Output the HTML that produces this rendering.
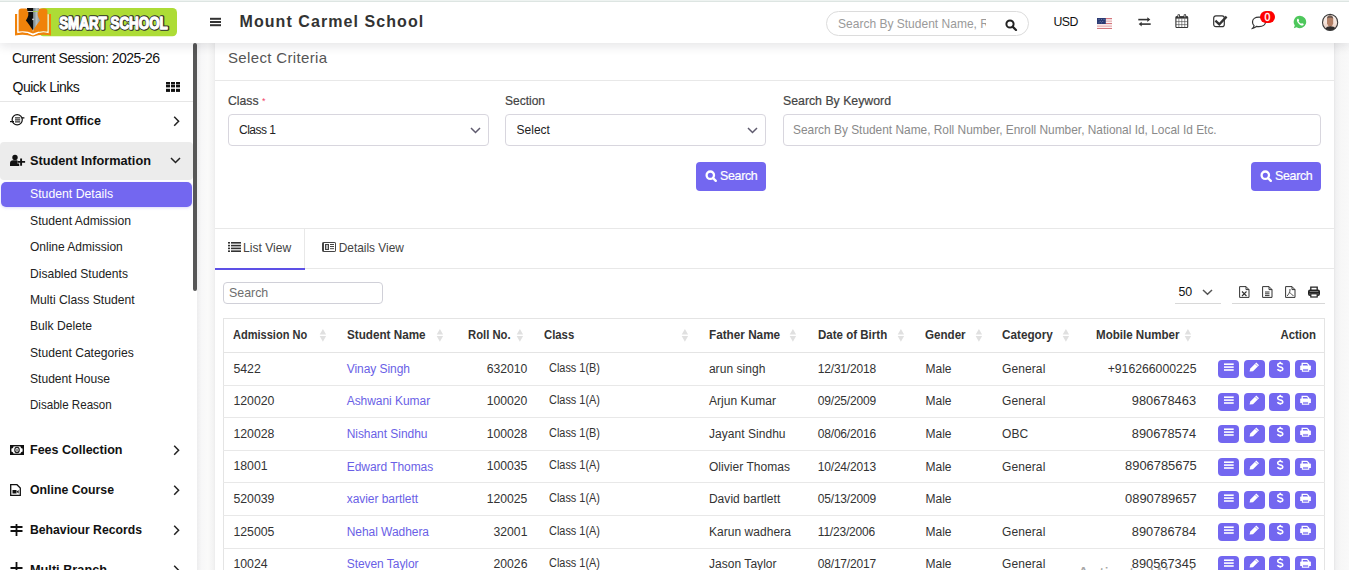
<!DOCTYPE html>
<html><head><meta charset="utf-8"><title>Student Details</title>
<style>
html,body{margin:0;padding:0;width:1349px;height:570px;overflow:hidden;background:#f8f8f8}
body{position:relative;font-family:"Liberation Sans",sans-serif}
.t{position:absolute;line-height:1;white-space:nowrap}
svg{display:block}
</style></head><body>
<div style="position:absolute;left:0px;top:0px;width:1349px;height:570px;background:#f8f8f8"></div><div style="position:absolute;left:215px;top:43px;width:1119px;height:527px;background:#fff"></div><div style="position:absolute;left:0px;top:43px;width:197px;height:527px;background:#fff"></div><div style="position:absolute;left:197px;top:43px;width:18px;height:527px;background:linear-gradient(90deg,#ededee,#f7f7f8 25%,#fafafa 60%,#f3f3f3 90%,#ececed)"></div><div style="position:absolute;left:193px;top:43px;width:4px;height:248px;background:#575757;border-radius:2px"></div><div style="position:absolute;left:1334px;top:43px;width:15px;height:527px;background:linear-gradient(90deg,#e6e6e7,#f1f1f2 12%,#f7f7f7 45%,#f9f9f9)"></div><div style="position:absolute;left:0px;top:0px;width:1349px;height:43px;background:#fff;box-shadow:0 3px 10px rgba(20,20,40,.11);z-index:2"></div><div style="position:absolute;left:0px;top:0px;width:1349px;height:1px;background:#eef3f1;z-index:3"></div><div style="position:absolute;left:0px;top:1px;width:1349px;height:1px;background:#dde5e2;z-index:3"></div><div style="position:absolute;left:0;top:0;width:1349px;height:43px;z-index:4"><svg style="position:absolute;left:15px;top:8px;" width="163" height="29" viewBox="0 0 163 29">
<defs><linearGradient id="nibg" x1="0" x2="1"><stop offset="0" stop-color="#6f7a7d"/><stop offset=".5" stop-color="#b5bfc2"/><stop offset="1" stop-color="#8d9799"/></linearGradient></defs>
<rect x="24" y="0" width="138" height="28.3" rx="4.5" fill="#addc36"/>
<path d="M0 6 H2.4 V24.6 Q10 22.6 18 27.2 Q26 22.6 33.6 24.6 V6 H36 V27.6 Q27 25.6 18 28.4 Q9 25.6 0 27.6Z" fill="#f0820a"/>
<path d="M3 6.2 V24.3 Q10.5 22.3 18 26.7 Q25.5 22.3 33 24.3 V6.2" fill="none" stroke="#fff" stroke-width="1.3"/>
<path d="M3.6 3 Q3.6 0.5 6.5 0.5 H11 Q13 0.8 13.6 3 L18 24 L18 25.6 Q11 22.2 3.6 23.6Z" fill="#f0820a"/>
<path d="M32.4 3 Q32.4 0.5 29.5 0.5 H25 Q23 0.8 22.4 3 L18 24 L18 25.6 Q25 22.2 32.4 23.6Z" fill="#f0820a"/>
<path d="M11.9 0 H18 V22.6 L14 16.6 Q12.2 14.2 10.9 12.5 Q12.6 10.2 13.3 7.2 V3.9 L12.5 3.1Z" fill="#0d0d0d"/>
<path d="M18 0 H24.2 L23.5 3.1 L22.7 3.9 V7.2 Q23.4 10.2 25.1 12.5 Q23.8 14.2 22 16.6 L18 22.6Z" fill="url(#nibg)"/>
<rect x="12.5" y="3.1" width="5.5" height="0.8" fill="#e6e6e6"/><rect x="18" y="3.1" width="5.5" height="0.8" fill="#a9d33a"/>
<circle cx="18" cy="11.3" r="0.9" fill="#ddd"/>
<g font-family="Liberation Sans" font-weight="bold" font-size="16.2">
<text x="44.2" y="20.9" textLength="108.6" lengthAdjust="spacingAndGlyphs" fill="#2e2e2e" stroke="#2e2e2e" stroke-width="3.3" stroke-linejoin="round" transform="translate(0.3,0.4)">SMART SCHOOL</text>
<text x="44.2" y="20.9" textLength="108.6" lengthAdjust="spacingAndGlyphs" fill="#fff" stroke="#fff" stroke-width="1.3" stroke-linejoin="round">SMART SCHOOL</text>
</g>
</svg><svg style="position:absolute;left:209px;top:17px;" width="13" height="10" viewBox="0 0 13 10"><rect x="1" y="0.8" width="11" height="2" fill="#333"/><rect x="1" y="4" width="11" height="2" fill="#333"/><rect x="1" y="7.2" width="11" height="2" fill="#333"/></svg><div class="t" style="left:239.5px;top:13.66px;font-size:16px;color:#333;font-weight:bold;letter-spacing:1.07px">Mount Carmel School</div><div style="position:absolute;left:826px;top:11px;width:203px;height:25px;box-sizing:border-box;border:1px solid #dcdcdc;border-radius:13px;background:#fff"></div><div style="position:absolute;left:838px;top:14px;width:148px;height:20px;overflow:hidden"><div class="t" style="left:0;top:3.93px;font-size:12.6px;color:#9a9a9a;transform:scaleX(0.9540);transform-origin:left top">Search By Student Name, Roll Number</div></div><svg style="position:absolute;left:1005px;top:19px;" width="13" height="12" viewBox="0 0 13 12"><circle cx="5" cy="5" r="3.6" fill="none" stroke="#222" stroke-width="2"/><path d="M7.6 7.6 L11 11" stroke="#222" stroke-width="2.2" stroke-linecap="round"/></svg><div class="t" style="left:1053.6px;top:15.59px;font-size:12.3px;color:#111;font-weight:normal;letter-spacing:-0.6px">USD</div><svg style="position:absolute;left:1097px;top:18px;" width="15" height="11.2" viewBox="0 0 15 11.2"><rect width="15" height="11.2" fill="#fbf3f3"/><rect y="0" width="15" height="1.2" fill="#d4777e"/><rect y="2.4" width="15" height="1.6" fill="#ebc0c3"/><rect y="5" width="15" height="1.1" fill="#d4777e"/><rect y="7.4" width="15" height="1.6" fill="#ebc0c3"/><rect y="10" width="15" height="1.2" fill="#d4777e"/><rect width="8.8" height="6" fill="#2b3b74"/><g fill="#7886b0"><rect x="1.5" y="1.2" width="1" height="0.8"/><rect x="4" y="1.2" width="1" height="0.8"/><rect x="6.5" y="1.2" width="1" height="0.8"/><rect x="2.7" y="3" width="1" height="0.8"/><rect x="5.2" y="3" width="1" height="0.8"/><rect x="1.5" y="4.6" width="1" height="0.6"/><rect x="4" y="4.6" width="1" height="0.6"/></g></svg><svg style="position:absolute;left:1137px;top:17px;" width="15" height="10" viewBox="0 0 15 10"><path d="M1.3 2.6 H11.5" stroke="#333" stroke-width="1.6"/><path d="M10.3 0.3 L13.3 2.6 L10.3 4.9Z" fill="#333"/><path d="M3.5 7.1 H13.7" stroke="#333" stroke-width="1.6"/><path d="M4.7 4.8 L1.7 7.1 L4.7 9.4Z" fill="#333"/></svg><svg style="position:absolute;left:1175px;top:14px;" width="14" height="14" viewBox="0 0 14 14"><rect x="0.9" y="2.7" width="11.8" height="10.8" rx="0.8" fill="none" stroke="#333" stroke-width="1.1"/><rect x="0.9" y="2.4" width="11.8" height="2.2" fill="#333"/><rect x="2.9" y="0.3" width="1.6" height="3.2" rx=".7" fill="#fff" stroke="#333" stroke-width="0.9"/><rect x="9.1" y="0.3" width="1.6" height="3.2" rx=".7" fill="#fff" stroke="#333" stroke-width="0.9"/><path d="M3.85 4.5 V13.5 M6.8 4.5 V13.5 M9.75 4.5 V13.5 M0.9 7.6 H12.7 M0.9 10.6 H12.7" stroke="#444" stroke-width="0.6"/></svg><svg style="position:absolute;left:1212px;top:15px;" width="16" height="13" viewBox="0 0 16 13"><rect x="1.7" y="0.8" width="10.6" height="10.8" rx="2.2" fill="none" stroke="#333" stroke-width="1.2"/><path d="M3.4 5.6 L7.3 9.3 L14.6 1.6" fill="none" stroke="#333" stroke-width="2.3"/></svg><svg style="position:absolute;left:1251px;top:15px;" width="16" height="15" viewBox="0 0 16 15"><path d="M8 2.2 C11.9 2.2 14.5 4.2 14.5 6.9 C14.5 9.6 11.9 11.6 8 11.6 C7.2 11.6 6.4 11.5 5.7 11.3 C4.6 12.2 3.2 12.9 1.6 13.3 C2.4 12.5 2.9 11.6 3.1 10.7 C1.9 9.7 1.5 8.4 1.5 6.9 C1.5 4.2 4.1 2.2 8 2.2Z" fill="none" stroke="#333" stroke-width="1.2"/></svg><div style="position:absolute;left:1260px;top:10.7px;width:15px;height:12.5px;background:#fe0000;border-radius:7px;z-index:5"></div><div class="t" style="left:1260px;width:15px;text-align:center;top:12.11px;font-size:10.5px;color:#fff;font-weight:normal;-webkit-text-stroke:0.3px #fff;z-index:6">0</div><svg style="position:absolute;left:1292.5px;top:15.3px;" width="14" height="14" viewBox="0 0 14 14"><path d="M7 0.8 A6.2 6.2 0 1 1 3.6 12.2 L0.8 13.2 L1.8 10.5 A6.2 6.2 0 0 1 7 0.8Z" fill="#4ec75c"/><path d="M4.4 3.9 C4.8 3.5 5.3 3.6 5.5 4 L6.1 5.3 C6.2 5.6 6 5.9 5.8 6.1 C5.6 6.3 5.6 6.5 5.8 6.8 C6.3 7.6 6.9 8.2 7.7 8.6 C8 8.8 8.2 8.7 8.4 8.5 C8.6 8.2 8.9 8.1 9.2 8.2 L10.4 8.8 C10.8 9 10.8 9.5 10.5 9.9 C9.9 10.6 9 10.8 8.1 10.4 C6.4 9.7 5 8.3 4.2 6.6 C3.8 5.6 3.9 4.5 4.4 3.9Z" fill="#fff"/></svg><svg style="position:absolute;left:1321px;top:13px;" width="18" height="19" viewBox="0 0 18 19"><defs><linearGradient id="avb" x1="0" y1="0" x2="0" y2="1"><stop offset="0" stop-color="#f6f1ee"/><stop offset=".55" stop-color="#f6e3da"/><stop offset=".8" stop-color="#e9cfc4"/><stop offset="1" stop-color="#9aa9b8"/></linearGradient></defs><ellipse cx="9.1" cy="9.4" rx="7.6" ry="8" fill="url(#avb)"/><path d="M6 5.5 Q6.3 2.6 9 2.6 Q11.8 2.6 12.2 5.5 L12.2 10.5 Q11.8 13.2 9.3 13.5 Q6.6 13.2 6 10.5Z" fill="#b38066"/><path d="M6 5.6 Q6.3 2.5 9 2.5 Q11.8 2.5 12.2 5.6 Q10.8 4.6 9 4.7 Q7.4 4.6 6 5.6Z" fill="#6d5a52"/><path d="M4.2 15.6 Q6 13.3 9.3 13.3 Q13 13.3 14.8 15.3 Q12.6 17.6 9.1 17.6 Q6.2 17.6 4.2 15.6Z" fill="#2f2b2a"/><ellipse cx="9.1" cy="9.4" rx="7.6" ry="8" fill="none" stroke="#3a3a3a" stroke-width="1.1"/></svg></div><div class="t" style="left:12px;top:50.95px;font-size:14px;color:#111;font-weight:normal;letter-spacing:-0.5px">Current Session: 2025-26</div><div class="t" style="left:12.5px;top:80.35px;font-size:14px;color:#111;font-weight:normal;letter-spacing:-0.5px">Quick Links</div><svg style="position:absolute;left:166px;top:82px;" width="14" height="10" viewBox="0 0 14 10"><rect x="0" y="0" width="4" height="2.4" fill="#111"/><rect x="0" y="2.8" width="4" height="2.6" fill="#111"/><rect x="0" y="6.8" width="4" height="3.1" fill="#111"/><rect x="5" y="0" width="4" height="2.4" fill="#111"/><rect x="5" y="2.8" width="4" height="2.6" fill="#111"/><rect x="5" y="6.8" width="4" height="3.1" fill="#111"/><rect x="10" y="0" width="4" height="2.4" fill="#111"/><rect x="10" y="2.8" width="4" height="2.6" fill="#111"/><rect x="10" y="6.8" width="4" height="3.1" fill="#111"/></svg><div style="position:absolute;left:0px;top:101px;width:193px;height:1px;background:#e6e6e6"></div><div class="t" style="left:30px;top:113.76px;font-size:13.4px;color:#111;font-weight:bold;transform:scaleX(0.9350);transform-origin:left top;">Front Office</div><svg style="position:absolute;left:10px;top:114px;" width="15" height="12" viewBox="0 0 15 12"><circle cx="7.2" cy="5.8" r="5.1" fill="none" stroke="#111" stroke-width="1.2"/><path d="M5 3.9 H10.2 M5 5.9 H10.2 M5 7.9 H10.2" stroke="#333" stroke-width="1.3"/><path d="M0 7.6 H4 M11.6 3.9 H14.4" stroke="#111" stroke-width="1.1"/></svg><svg style="position:absolute;left:173px;top:116px;" width="7" height="11" viewBox="0 0 7 11"><path d="M1.2 0.8 L5.6 5.3 L1.2 9.8" fill="none" stroke="#222" stroke-width="1.5"/></svg><div style="position:absolute;left:0px;top:142px;width:192.5px;height:38px;background:#ececec;border-radius:4px"></div><div class="t" style="left:30px;top:153.59px;font-size:13.6px;color:#111;font-weight:bold;transform:scaleX(0.9366);transform-origin:left top;">Student Information</div><svg style="position:absolute;left:9px;top:154px;" width="17" height="13" viewBox="0 0 17 13"><circle cx="6" cy="3.4" r="2.7" fill="#111"/><path d="M1 12 V9.6 Q1 6.3 4.3 6.3 H7.7 Q10.5 6.3 10.5 9.6 V12Z" fill="#111"/><path d="M12.1 4.6 V11.8 M8.4 7.9 H16.1" stroke="#ececec" stroke-width="3.4"/><path d="M12.1 4.6 V11.8 M8.4 7.9 H16.1" stroke="#111" stroke-width="1.9"/></svg><svg style="position:absolute;left:169.5px;top:156.5px;" width="11" height="7" viewBox="0 0 11 7"><path d="M1 1 L5.5 5.5 L10 1" fill="none" stroke="#222" stroke-width="1.5"/></svg><div style="position:absolute;left:1px;top:182px;width:191px;height:25px;background:#7367f0;border-radius:5px;box-shadow:0 1px 3px rgba(115,103,240,.25)"></div><div class="t" style="left:30px;top:187.90px;font-size:12.4px;color:#fff;font-weight:normal;transform:scaleX(0.9894);transform-origin:left top;">Student Details</div><div class="t" style="left:30px;top:215.10px;font-size:12.4px;color:#222;font-weight:normal;transform:scaleX(0.9843);transform-origin:left top;">Student Admission</div><div class="t" style="left:30px;top:241.40px;font-size:12.4px;color:#222;font-weight:normal;transform:scaleX(0.9686);transform-origin:left top;">Online Admission</div><div class="t" style="left:30px;top:267.70px;font-size:12.4px;color:#222;font-weight:normal;transform:scaleX(0.9737);transform-origin:left top;">Disabled Students</div><div class="t" style="left:30px;top:294.00px;font-size:12.4px;color:#222;font-weight:normal;transform:scaleX(0.9792);transform-origin:left top;">Multi Class Student</div><div class="t" style="left:30px;top:320.30px;font-size:12.4px;color:#222;font-weight:normal;transform:scaleX(0.9793);transform-origin:left top;">Bulk Delete</div><div class="t" style="left:30px;top:346.60px;font-size:12.4px;color:#222;font-weight:normal;transform:scaleX(0.9778);transform-origin:left top;">Student Categories</div><div class="t" style="left:30px;top:372.90px;font-size:12.4px;color:#222;font-weight:normal;transform:scaleX(0.9752);transform-origin:left top;">Student House</div><div class="t" style="left:30px;top:399.20px;font-size:12.4px;color:#222;font-weight:normal;transform:scaleX(0.9344);transform-origin:left top;">Disable Reason</div><div class="t" style="left:30px;top:443.14px;font-size:13.3px;color:#111;font-weight:bold;transform:scaleX(0.9410);transform-origin:left top;">Fees Collection</div><svg style="position:absolute;left:173px;top:445.4px;" width="7" height="11" viewBox="0 0 7 11"><path d="M1.2 0.8 L5.6 5.3 L1.2 9.8" fill="none" stroke="#222" stroke-width="1.5"/></svg><div class="t" style="left:30px;top:483.04px;font-size:13.3px;color:#111;font-weight:bold;transform:scaleX(0.9241);transform-origin:left top;">Online Course</div><svg style="position:absolute;left:173px;top:485.3px;" width="7" height="11" viewBox="0 0 7 11"><path d="M1.2 0.8 L5.6 5.3 L1.2 9.8" fill="none" stroke="#222" stroke-width="1.5"/></svg><div class="t" style="left:30px;top:523.14px;font-size:13.3px;color:#111;font-weight:bold;transform:scaleX(0.9184);transform-origin:left top;">Behaviour Records</div><svg style="position:absolute;left:173px;top:525.4px;" width="7" height="11" viewBox="0 0 7 11"><path d="M1.2 0.8 L5.6 5.3 L1.2 9.8" fill="none" stroke="#222" stroke-width="1.5"/></svg><div class="t" style="left:30px;top:563.04px;font-size:13.3px;color:#111;font-weight:bold;transform:scaleX(0.9560);transform-origin:left top;">Multi Branch</div><svg style="position:absolute;left:173px;top:565.3px;" width="7" height="11" viewBox="0 0 7 11"><path d="M1.2 0.8 L5.6 5.3 L1.2 9.8" fill="none" stroke="#222" stroke-width="1.5"/></svg><svg style="position:absolute;left:10px;top:445px;" width="14" height="10" viewBox="0 0 14 10"><rect x="0.7" y="0.7" width="12.6" height="8.6" fill="none" stroke="#111" stroke-width="1.4"/><path d="M0.7 0.7 H3.6 A2.9 2.9 0 0 1 0.7 3.6Z M13.3 0.7 H10.4 A2.9 2.9 0 0 0 13.3 3.6Z M0.7 9.3 H3.6 A2.9 2.9 0 0 0 0.7 6.4Z M13.3 9.3 H10.4 A2.9 2.9 0 0 1 13.3 6.4Z" fill="#111"/><ellipse cx="7" cy="5" rx="2.2" ry="2.7" fill="none" stroke="#111" stroke-width="1.1"/><path d="M7 3.6 V6.6" stroke="#111" stroke-width="0.9"/></svg><svg style="position:absolute;left:10px;top:484px;" width="11" height="12" viewBox="0 0 11 12"><path d="M0.7 0.7 H7 L10.3 4 V11.3 H0.7Z" fill="none" stroke="#111" stroke-width="1.3"/><rect x="2.5" y="6" width="4" height="3.5" fill="#111"/><path d="M6.5 7.7 L8.6 6 V9.4Z" fill="#111"/></svg><svg style="position:absolute;left:10px;top:524px;" width="13" height="12" viewBox="0 0 13 12"><rect x="5.6" y="0" width="1.8" height="12" fill="#111"/><rect x="0.5" y="2" width="12" height="2" fill="#111"/><rect x="0.5" y="6" width="12" height="2" fill="#111"/></svg><svg style="position:absolute;left:10px;top:562px;" width="13" height="10" viewBox="0 0 13 10"><rect x="5.6" y="0" width="1.8" height="10" fill="#111"/><rect x="0.5" y="5" width="12" height="2" fill="#111"/></svg><div class="t" style="left:228px;top:50.10px;font-size:15px;color:#555;font-weight:normal;letter-spacing:0.35px">Select Criteria</div><div style="position:absolute;left:215px;top:80px;width:1119px;height:1px;background:#e8e8e8"></div><div class="t" style="left:228px;top:94.67px;font-size:12.2px;color:#444;font-weight:normal;-webkit-text-stroke:0.2px #444">Class</div><div class="t" style="left:262px;top:97.38px;font-size:9px;color:#f2426a;font-weight:normal;">*</div><div class="t" style="left:505px;top:94.84px;font-size:12px;color:#444;font-weight:normal;-webkit-text-stroke:0.2px #444">Section</div><div class="t" style="left:783px;top:94.59px;font-size:12.3px;color:#444;font-weight:normal;-webkit-text-stroke:0.2px #444">Search By Keyword</div><div style="position:absolute;left:228px;top:114px;width:261px;height:32px;box-sizing:border-box;border:1px solid #d8d6de;border-radius:4px;background:#fff"></div><div style="position:absolute;left:505px;top:114px;width:261px;height:32px;box-sizing:border-box;border:1px solid #d8d6de;border-radius:4px;background:#fff"></div><div style="position:absolute;left:783px;top:114px;width:538px;height:32px;box-sizing:border-box;border:1px solid #d8d6de;border-radius:4px;background:#fff"></div><div class="t" style="left:239px;top:123.84px;font-size:12px;color:#222;font-weight:normal;letter-spacing:-0.5px">Class 1</div><div class="t" style="left:516.6px;top:123.84px;font-size:12px;color:#222;font-weight:normal;">Select</div><div class="t" style="left:793px;top:124.73px;font-size:11.9px;color:#8a8a8a;font-weight:normal;">Search By Student Name, Roll Number, Enroll Number, National Id, Local Id Etc.</div><svg style="position:absolute;left:469.5px;top:127px;" width="11" height="7" viewBox="0 0 11 7"><path d="M1 1 L5.5 5.5 L10 1" fill="none" stroke="#5f5b6e" stroke-width="1.5"/></svg><svg style="position:absolute;left:746.5px;top:127px;" width="11" height="7" viewBox="0 0 11 7"><path d="M1 1 L5.5 5.5 L10 1" fill="none" stroke="#5f5b6e" stroke-width="1.5"/></svg><div style="position:absolute;left:696px;top:162px;width:70px;height:29px;background:#7367f0;border-radius:4px"></div><svg style="position:absolute;left:705px;top:170px;" width="13" height="13" viewBox="0 0 13 13"><circle cx="5.3" cy="5.2" r="3.7" fill="none" stroke="#fff" stroke-width="2.3"/><path d="M8 8 L10.8 10.8" stroke="#fff" stroke-width="2.4" stroke-linecap="round"/></svg><div class="t" style="left:720px;top:170.10px;font-size:12.4px;color:#fff;font-weight:normal;letter-spacing:-0.3px;-webkit-text-stroke:0.2px #fff">Search</div><div style="position:absolute;left:1251px;top:162px;width:70px;height:29px;background:#7367f0;border-radius:4px"></div><svg style="position:absolute;left:1260px;top:170px;" width="13" height="13" viewBox="0 0 13 13"><circle cx="5.3" cy="5.2" r="3.7" fill="none" stroke="#fff" stroke-width="2.3"/><path d="M8 8 L10.8 10.8" stroke="#fff" stroke-width="2.4" stroke-linecap="round"/></svg><div class="t" style="left:1275px;top:170.10px;font-size:12.4px;color:#fff;font-weight:normal;letter-spacing:-0.3px;-webkit-text-stroke:0.2px #fff">Search</div><div style="position:absolute;left:215px;top:228px;width:1119px;height:1px;background:#e8e8e8"></div><div style="position:absolute;left:304px;top:229px;width:1px;height:39px;background:#e8e8e8"></div><div style="position:absolute;left:215px;top:268px;width:1119px;height:1px;background:#e8e8e8"></div><div style="position:absolute;left:215px;top:268px;width:90px;height:2px;background:#5d50e6"></div><svg style="position:absolute;left:228px;top:242px;" width="13" height="10" viewBox="0 0 13 10"><g fill="#333"><rect x="0" y="0" width="2" height="1.6"/><rect x="3" y="0" width="10" height="1.6"/><rect x="0" y="2.8" width="2" height="1.6"/><rect x="3" y="2.8" width="10" height="1.6"/><rect x="0" y="5.6" width="2" height="1.6"/><rect x="3" y="5.6" width="10" height="1.6"/><rect x="0" y="8.4" width="2" height="1.6"/><rect x="3" y="8.4" width="10" height="1.6"/></g></svg><div class="t" style="left:243px;top:241.96px;font-size:12.1px;color:#444;font-weight:normal;">List View</div><svg style="position:absolute;left:322px;top:242px;" width="14" height="10" viewBox="0 0 14 10"><rect x="0.5" y="0.5" width="13" height="9" rx="0.6" fill="none" stroke="#444" stroke-width="1"/><rect x="1" y="1" width="1" height="8" fill="#444"/><rect x="3.5" y="2.5" width="3" height="5" fill="#bbb" stroke="#444" stroke-width="1"/><rect x="8" y="2" width="4" height="1" fill="#444"/><rect x="8" y="4" width="4" height="1" fill="#444"/><rect x="8" y="6" width="4" height="1.2" fill="#666"/></svg><div class="t" style="left:338.7px;top:242.93px;font-size:11.9px;color:#444;font-weight:normal;">Details View</div><div style="position:absolute;left:223px;top:282px;width:160px;height:22px;box-sizing:border-box;border:1px solid #d0d0d8;border-radius:4px;background:#fff"></div><div class="t" style="left:229px;top:287.00px;font-size:12.4px;color:#6e6e6e;font-weight:normal;">Search</div><div class="t" style="left:1178.4px;top:285.70px;font-size:12.4px;color:#111;font-weight:normal;">50</div><svg style="position:absolute;left:1202px;top:289px;" width="11" height="7" viewBox="0 0 11 7"><path d="M1 1 L5.5 5.3 L10 1" fill="none" stroke="#555" stroke-width="1.5"/></svg><div style="position:absolute;left:1175px;top:303px;width:46px;height:1px;background:#d8d8d8"></div><div style="position:absolute;left:1232px;top:303px;width:93px;height:1px;background:#d8d8d8"></div><svg style="position:absolute;left:1238.5px;top:286px;" width="11" height="12" viewBox="0 0 11 12"><path d="M0.6 0.6 H7 L10 3.6 V11.4 H0.6Z M7 0.6 V3.6 H10" fill="none" stroke="#333" stroke-width="1"/><path d="M3 5.5 L7.5 10 M7.5 5.5 L3 10" stroke="#333" stroke-width="1.1"/></svg><svg style="position:absolute;left:1261.5px;top:286px;" width="11" height="12" viewBox="0 0 11 12"><path d="M0.6 0.6 H7 L10 3.6 V11.4 H0.6Z M7 0.6 V3.6 H10" fill="none" stroke="#333" stroke-width="1"/><path d="M3 6 H7.5 M3 7.8 H7.5 M3 9.6 H7.5" stroke="#333" stroke-width="1"/></svg><svg style="position:absolute;left:1284.5px;top:286px;" width="11" height="12" viewBox="0 0 11 12"><path d="M0.6 0.6 H7 L10 3.6 V11.4 H0.6Z M7 0.6 V3.6 H10" fill="none" stroke="#333" stroke-width="1"/><path d="M5 3 C5.5 6 3 9 2 10 M5 6.5 C6 8 7.5 9.5 8.5 9.5" fill="none" stroke="#333" stroke-width="0.9"/></svg><svg style="position:absolute;left:1307.5px;top:286px;" width="12" height="12" viewBox="0 0 12 12"><path d="M2.8 4.2 V1.2 H9.2 V4.2" fill="none" stroke="#222" stroke-width="1.3"/><rect x="0.8" y="4.2" width="10.4" height="5" rx="1.2" fill="none" stroke="#222" stroke-width="1.6"/><rect x="0.8" y="5.4" width="10.4" height="2.2" fill="#222"/><rect x="2.8" y="7.8" width="6.4" height="3.2" fill="#fff" stroke="#222" stroke-width="1.2"/></svg><div style="position:absolute;left:223px;top:318px;width:1102px;height:252px;box-sizing:border-box;border:1px solid #e4e4e4;border-bottom:none"></div><div style="position:absolute;left:223px;top:352px;width:1102px;height:1px;background:#e4e4e4"></div><div style="position:absolute;left:223px;top:385px;width:1102px;height:1px;background:#e8e8e8"></div><div style="position:absolute;left:223px;top:417px;width:1102px;height:1px;background:#e8e8e8"></div><div style="position:absolute;left:223px;top:450px;width:1102px;height:1px;background:#e8e8e8"></div><div style="position:absolute;left:223px;top:482px;width:1102px;height:1px;background:#e8e8e8"></div><div style="position:absolute;left:223px;top:515px;width:1102px;height:1px;background:#e8e8e8"></div><div style="position:absolute;left:223px;top:548px;width:1102px;height:1px;background:#e8e8e8"></div><div class="t" style="left:233.4px;top:328.62px;font-size:12.5px;color:#333;font-weight:bold;transform:scaleX(0.8830);transform-origin:left top;">Admission No</div><svg style="position:absolute;left:319px;top:329px;" width="8" height="13" viewBox="0 0 8 13"><path d="M3.9 0.1 L7.1 5.6 H0.7Z M3.9 12.7 L7.1 7.1 H0.7Z" fill="#e0e0e0"/></svg><div class="t" style="left:346.7px;top:328.62px;font-size:12.5px;color:#333;font-weight:bold;transform:scaleX(0.9352);transform-origin:left top;">Student Name</div><svg style="position:absolute;left:436px;top:329px;" width="8" height="13" viewBox="0 0 8 13"><path d="M3.9 0.1 L7.1 5.6 H0.7Z M3.9 12.7 L7.1 7.1 H0.7Z" fill="#e0e0e0"/></svg><div class="t" style="left:467.8px;top:328.62px;font-size:12.5px;color:#333;font-weight:bold;transform:scaleX(0.9022);transform-origin:left top;">Roll No.</div><svg style="position:absolute;left:516px;top:329px;" width="8" height="13" viewBox="0 0 8 13"><path d="M3.9 0.1 L7.1 5.6 H0.7Z M3.9 12.7 L7.1 7.1 H0.7Z" fill="#e0e0e0"/></svg><div class="t" style="left:543.8px;top:328.62px;font-size:12.5px;color:#333;font-weight:bold;transform:scaleX(0.9054);transform-origin:left top;">Class</div><svg style="position:absolute;left:681px;top:329px;" width="8" height="13" viewBox="0 0 8 13"><path d="M3.9 0.1 L7.1 5.6 H0.7Z M3.9 12.7 L7.1 7.1 H0.7Z" fill="#e0e0e0"/></svg><div class="t" style="left:708.9px;top:328.62px;font-size:12.5px;color:#333;font-weight:bold;transform:scaleX(0.9390);transform-origin:left top;">Father Name</div><svg style="position:absolute;left:789px;top:329px;" width="8" height="13" viewBox="0 0 8 13"><path d="M3.9 0.1 L7.1 5.6 H0.7Z M3.9 12.7 L7.1 7.1 H0.7Z" fill="#e0e0e0"/></svg><div class="t" style="left:817.8px;top:328.62px;font-size:12.5px;color:#333;font-weight:bold;transform:scaleX(0.9226);transform-origin:left top;">Date of Birth</div><svg style="position:absolute;left:897px;top:329px;" width="8" height="13" viewBox="0 0 8 13"><path d="M3.9 0.1 L7.1 5.6 H0.7Z M3.9 12.7 L7.1 7.1 H0.7Z" fill="#e0e0e0"/></svg><div class="t" style="left:925px;top:328.62px;font-size:12.5px;color:#333;font-weight:bold;transform:scaleX(0.9277);transform-origin:left top;">Gender</div><svg style="position:absolute;left:975px;top:329px;" width="8" height="13" viewBox="0 0 8 13"><path d="M3.9 0.1 L7.1 5.6 H0.7Z M3.9 12.7 L7.1 7.1 H0.7Z" fill="#e0e0e0"/></svg><div class="t" style="left:1002px;top:328.62px;font-size:12.5px;color:#333;font-weight:bold;transform:scaleX(0.9376);transform-origin:left top;">Category</div><svg style="position:absolute;left:1062px;top:329px;" width="8" height="13" viewBox="0 0 8 13"><path d="M3.9 0.1 L7.1 5.6 H0.7Z M3.9 12.7 L7.1 7.1 H0.7Z" fill="#e0e0e0"/></svg><div class="t" style="left:1095.5px;top:328.62px;font-size:12.5px;color:#333;font-weight:bold;transform:scaleX(0.9249);transform-origin:left top;">Mobile Number</div><svg style="position:absolute;left:1184px;top:329px;" width="8" height="13" viewBox="0 0 8 13"><path d="M3.9 0.1 L7.1 5.6 H0.7Z M3.9 12.7 L7.1 7.1 H0.7Z" fill="#e0e0e0"/></svg><div class="t" style="right:33px;top:328.62px;font-size:12.5px;color:#333;font-weight:bold;transform:scaleX(0.9129);transform-origin:right top;">Action</div><div class="t" style="left:233.4px;top:362.59px;font-size:12.3px;color:#333;font-weight:normal;">5422</div><div class="t" style="left:346.7px;top:362.84px;font-size:12px;color:#6a5fe6;font-weight:normal;letter-spacing:-0.05px">Vinay Singh</div><div class="t" style="right:821.6px;top:362.67px;font-size:12.2px;color:#333;font-weight:normal;">632010</div><div class="t" style="left:549px;top:361.59px;font-size:12.3px;color:#333;font-weight:normal;transform:scaleX(0.8883);transform-origin:left top;">Class 1(B)</div><div class="t" style="left:708.9px;top:362.84px;font-size:12px;color:#333;font-weight:normal;letter-spacing:0.05px">arun singh</div><div class="t" style="left:817.8px;top:362.84px;font-size:12px;color:#333;font-weight:normal;letter-spacing:-0.2px">12/31/2018</div><div class="t" style="left:925.5px;top:362.84px;font-size:12px;color:#333;font-weight:normal;">Male</div><div class="t" style="left:1002px;top:362.84px;font-size:12px;color:#333;font-weight:normal;letter-spacing:0.1px">General</div><div class="t" style="right:152.70000000000005px;top:362.67px;font-size:12.2px;color:#333;font-weight:normal;transform:scaleX(1.0040);transform-origin:right top;">+916266000225</div><div style="position:absolute;left:1218px;top:360.2px;width:21px;height:18px;background:#7367f0;border-radius:4px"></div><div style="position:absolute;left:1244px;top:360.2px;width:21px;height:18px;background:#7367f0;border-radius:4px"></div><div style="position:absolute;left:1269px;top:360.2px;width:21px;height:18px;background:#7367f0;border-radius:4px"></div><div style="position:absolute;left:1295px;top:360.2px;width:21px;height:18px;background:#7367f0;border-radius:4px"></div><svg style="position:absolute;left:1218px;top:360.2px;" width="21" height="18" viewBox="0 0 21 18"><rect x="6" y="3.4" width="9.7" height="1.6" fill="#fff"/><rect x="6" y="6.3" width="9.7" height="1.6" fill="#fff"/><rect x="6" y="9.2" width="9.7" height="1.6" fill="#fff"/></svg><svg style="position:absolute;left:1244px;top:360.2px;" width="21" height="18" viewBox="0 0 21 18"><path d="M5.6 11.6 L6.3 8.6 L12.3 2.6 L15 5.3 L9 11.3Z" fill="#fff"/><path d="M11.2 3.7 L13.9 6.4" stroke="#7367f0" stroke-width="0.6"/></svg><svg style="position:absolute;left:1269px;top:360.2px;" width="21" height="18" viewBox="0 0 21 18"><path d="M13.7 4.6 Q13.2 3.2 11.2 3.2 Q8.7 3.2 8.7 5.1 Q8.7 6.5 11.2 6.9 Q13.8 7.3 13.8 8.9 Q13.8 10.5 11.2 10.5 Q9.1 10.5 8.5 9.1" fill="none" stroke="#fff" stroke-width="1.5"/><path d="M11.2 1.8 V3.6 M11.2 10 V11.7" stroke="#fff" stroke-width="1.4"/></svg><svg style="position:absolute;left:1295px;top:360.2px;" width="21" height="18" viewBox="0 0 21 18"><path d="M7.2 6 V3.3 H12 L13.6 4.9 V6" fill="none" stroke="#fff" stroke-width="1.3"/><path d="M5.2 6.2 Q5.2 5.6 6 5.6 H15.1 Q15.9 5.6 15.9 6.4 V10 H5.2Z" fill="#fff"/><rect x="7.4" y="8.8" width="6.3" height="2.4" fill="#7367f0" stroke="#fff" stroke-width="1.1"/></svg><div class="t" style="left:233.4px;top:395.19px;font-size:12.3px;color:#333;font-weight:normal;">120020</div><div class="t" style="left:346.7px;top:395.44px;font-size:12px;color:#6a5fe6;font-weight:normal;letter-spacing:-0.05px">Ashwani Kumar</div><div class="t" style="right:821.6px;top:395.27px;font-size:12.2px;color:#333;font-weight:normal;">100020</div><div class="t" style="left:549px;top:394.19px;font-size:12.3px;color:#333;font-weight:normal;transform:scaleX(0.8883);transform-origin:left top;">Class 1(A)</div><div class="t" style="left:708.9px;top:395.44px;font-size:12px;color:#333;font-weight:normal;letter-spacing:0.05px">Arjun Kumar</div><div class="t" style="left:817.8px;top:395.44px;font-size:12px;color:#333;font-weight:normal;letter-spacing:-0.2px">09/25/2009</div><div class="t" style="left:925.5px;top:395.44px;font-size:12px;color:#333;font-weight:normal;">Male</div><div class="t" style="left:1002px;top:395.44px;font-size:12px;color:#333;font-weight:normal;letter-spacing:0.1px">General</div><div class="t" style="right:152.70000000000005px;top:395.27px;font-size:12.2px;color:#333;font-weight:normal;transform:scaleX(1.0513);transform-origin:right top;">980678463</div><div style="position:absolute;left:1218px;top:392.8px;width:21px;height:18px;background:#7367f0;border-radius:4px"></div><div style="position:absolute;left:1244px;top:392.8px;width:21px;height:18px;background:#7367f0;border-radius:4px"></div><div style="position:absolute;left:1269px;top:392.8px;width:21px;height:18px;background:#7367f0;border-radius:4px"></div><div style="position:absolute;left:1295px;top:392.8px;width:21px;height:18px;background:#7367f0;border-radius:4px"></div><svg style="position:absolute;left:1218px;top:392.8px;" width="21" height="18" viewBox="0 0 21 18"><rect x="6" y="3.4" width="9.7" height="1.6" fill="#fff"/><rect x="6" y="6.3" width="9.7" height="1.6" fill="#fff"/><rect x="6" y="9.2" width="9.7" height="1.6" fill="#fff"/></svg><svg style="position:absolute;left:1244px;top:392.8px;" width="21" height="18" viewBox="0 0 21 18"><path d="M5.6 11.6 L6.3 8.6 L12.3 2.6 L15 5.3 L9 11.3Z" fill="#fff"/><path d="M11.2 3.7 L13.9 6.4" stroke="#7367f0" stroke-width="0.6"/></svg><svg style="position:absolute;left:1269px;top:392.8px;" width="21" height="18" viewBox="0 0 21 18"><path d="M13.7 4.6 Q13.2 3.2 11.2 3.2 Q8.7 3.2 8.7 5.1 Q8.7 6.5 11.2 6.9 Q13.8 7.3 13.8 8.9 Q13.8 10.5 11.2 10.5 Q9.1 10.5 8.5 9.1" fill="none" stroke="#fff" stroke-width="1.5"/><path d="M11.2 1.8 V3.6 M11.2 10 V11.7" stroke="#fff" stroke-width="1.4"/></svg><svg style="position:absolute;left:1295px;top:392.8px;" width="21" height="18" viewBox="0 0 21 18"><path d="M7.2 6 V3.3 H12 L13.6 4.9 V6" fill="none" stroke="#fff" stroke-width="1.3"/><path d="M5.2 6.2 Q5.2 5.6 6 5.6 H15.1 Q15.9 5.6 15.9 6.4 V10 H5.2Z" fill="#fff"/><rect x="7.4" y="8.8" width="6.3" height="2.4" fill="#7367f0" stroke="#fff" stroke-width="1.1"/></svg><div class="t" style="left:233.4px;top:427.79px;font-size:12.3px;color:#333;font-weight:normal;">120028</div><div class="t" style="left:346.7px;top:428.04px;font-size:12px;color:#6a5fe6;font-weight:normal;letter-spacing:-0.05px">Nishant Sindhu</div><div class="t" style="right:821.6px;top:427.87px;font-size:12.2px;color:#333;font-weight:normal;">100028</div><div class="t" style="left:549px;top:426.79px;font-size:12.3px;color:#333;font-weight:normal;transform:scaleX(0.8883);transform-origin:left top;">Class 1(B)</div><div class="t" style="left:708.9px;top:428.04px;font-size:12px;color:#333;font-weight:normal;letter-spacing:0.05px">Jayant Sindhu</div><div class="t" style="left:817.8px;top:428.04px;font-size:12px;color:#333;font-weight:normal;letter-spacing:-0.2px">08/06/2016</div><div class="t" style="left:925.5px;top:428.04px;font-size:12px;color:#333;font-weight:normal;">Male</div><div class="t" style="left:1002px;top:428.04px;font-size:12px;color:#333;font-weight:normal;letter-spacing:0.1px">OBC</div><div class="t" style="right:152.70000000000005px;top:427.87px;font-size:12.2px;color:#333;font-weight:normal;transform:scaleX(1.0513);transform-origin:right top;">890678574</div><div style="position:absolute;left:1218px;top:425.4px;width:21px;height:18px;background:#7367f0;border-radius:4px"></div><div style="position:absolute;left:1244px;top:425.4px;width:21px;height:18px;background:#7367f0;border-radius:4px"></div><div style="position:absolute;left:1269px;top:425.4px;width:21px;height:18px;background:#7367f0;border-radius:4px"></div><div style="position:absolute;left:1295px;top:425.4px;width:21px;height:18px;background:#7367f0;border-radius:4px"></div><svg style="position:absolute;left:1218px;top:425.4px;" width="21" height="18" viewBox="0 0 21 18"><rect x="6" y="3.4" width="9.7" height="1.6" fill="#fff"/><rect x="6" y="6.3" width="9.7" height="1.6" fill="#fff"/><rect x="6" y="9.2" width="9.7" height="1.6" fill="#fff"/></svg><svg style="position:absolute;left:1244px;top:425.4px;" width="21" height="18" viewBox="0 0 21 18"><path d="M5.6 11.6 L6.3 8.6 L12.3 2.6 L15 5.3 L9 11.3Z" fill="#fff"/><path d="M11.2 3.7 L13.9 6.4" stroke="#7367f0" stroke-width="0.6"/></svg><svg style="position:absolute;left:1269px;top:425.4px;" width="21" height="18" viewBox="0 0 21 18"><path d="M13.7 4.6 Q13.2 3.2 11.2 3.2 Q8.7 3.2 8.7 5.1 Q8.7 6.5 11.2 6.9 Q13.8 7.3 13.8 8.9 Q13.8 10.5 11.2 10.5 Q9.1 10.5 8.5 9.1" fill="none" stroke="#fff" stroke-width="1.5"/><path d="M11.2 1.8 V3.6 M11.2 10 V11.7" stroke="#fff" stroke-width="1.4"/></svg><svg style="position:absolute;left:1295px;top:425.4px;" width="21" height="18" viewBox="0 0 21 18"><path d="M7.2 6 V3.3 H12 L13.6 4.9 V6" fill="none" stroke="#fff" stroke-width="1.3"/><path d="M5.2 6.2 Q5.2 5.6 6 5.6 H15.1 Q15.9 5.6 15.9 6.4 V10 H5.2Z" fill="#fff"/><rect x="7.4" y="8.8" width="6.3" height="2.4" fill="#7367f0" stroke="#fff" stroke-width="1.1"/></svg><div class="t" style="left:233.4px;top:460.39px;font-size:12.3px;color:#333;font-weight:normal;">18001</div><div class="t" style="left:346.7px;top:460.64px;font-size:12px;color:#6a5fe6;font-weight:normal;letter-spacing:-0.05px">Edward Thomas</div><div class="t" style="right:821.6px;top:460.47px;font-size:12.2px;color:#333;font-weight:normal;">100035</div><div class="t" style="left:549px;top:459.39px;font-size:12.3px;color:#333;font-weight:normal;transform:scaleX(0.8883);transform-origin:left top;">Class 1(A)</div><div class="t" style="left:708.9px;top:460.64px;font-size:12px;color:#333;font-weight:normal;letter-spacing:0.05px">Olivier Thomas</div><div class="t" style="left:817.8px;top:460.64px;font-size:12px;color:#333;font-weight:normal;letter-spacing:-0.2px">10/24/2013</div><div class="t" style="left:925.5px;top:460.64px;font-size:12px;color:#333;font-weight:normal;">Male</div><div class="t" style="left:1002px;top:460.64px;font-size:12px;color:#333;font-weight:normal;letter-spacing:0.1px">General</div><div class="t" style="right:152.70000000000005px;top:460.47px;font-size:12.2px;color:#333;font-weight:normal;transform:scaleX(1.0582);transform-origin:right top;">8906785675</div><div style="position:absolute;left:1218px;top:458.0px;width:21px;height:18px;background:#7367f0;border-radius:4px"></div><div style="position:absolute;left:1244px;top:458.0px;width:21px;height:18px;background:#7367f0;border-radius:4px"></div><div style="position:absolute;left:1269px;top:458.0px;width:21px;height:18px;background:#7367f0;border-radius:4px"></div><div style="position:absolute;left:1295px;top:458.0px;width:21px;height:18px;background:#7367f0;border-radius:4px"></div><svg style="position:absolute;left:1218px;top:458.0px;" width="21" height="18" viewBox="0 0 21 18"><rect x="6" y="3.4" width="9.7" height="1.6" fill="#fff"/><rect x="6" y="6.3" width="9.7" height="1.6" fill="#fff"/><rect x="6" y="9.2" width="9.7" height="1.6" fill="#fff"/></svg><svg style="position:absolute;left:1244px;top:458.0px;" width="21" height="18" viewBox="0 0 21 18"><path d="M5.6 11.6 L6.3 8.6 L12.3 2.6 L15 5.3 L9 11.3Z" fill="#fff"/><path d="M11.2 3.7 L13.9 6.4" stroke="#7367f0" stroke-width="0.6"/></svg><svg style="position:absolute;left:1269px;top:458.0px;" width="21" height="18" viewBox="0 0 21 18"><path d="M13.7 4.6 Q13.2 3.2 11.2 3.2 Q8.7 3.2 8.7 5.1 Q8.7 6.5 11.2 6.9 Q13.8 7.3 13.8 8.9 Q13.8 10.5 11.2 10.5 Q9.1 10.5 8.5 9.1" fill="none" stroke="#fff" stroke-width="1.5"/><path d="M11.2 1.8 V3.6 M11.2 10 V11.7" stroke="#fff" stroke-width="1.4"/></svg><svg style="position:absolute;left:1295px;top:458.0px;" width="21" height="18" viewBox="0 0 21 18"><path d="M7.2 6 V3.3 H12 L13.6 4.9 V6" fill="none" stroke="#fff" stroke-width="1.3"/><path d="M5.2 6.2 Q5.2 5.6 6 5.6 H15.1 Q15.9 5.6 15.9 6.4 V10 H5.2Z" fill="#fff"/><rect x="7.4" y="8.8" width="6.3" height="2.4" fill="#7367f0" stroke="#fff" stroke-width="1.1"/></svg><div class="t" style="left:233.4px;top:492.99px;font-size:12.3px;color:#333;font-weight:normal;">520039</div><div class="t" style="left:346.7px;top:493.24px;font-size:12px;color:#6a5fe6;font-weight:normal;letter-spacing:-0.05px">xavier bartlett</div><div class="t" style="right:821.6px;top:493.07px;font-size:12.2px;color:#333;font-weight:normal;">120025</div><div class="t" style="left:549px;top:491.99px;font-size:12.3px;color:#333;font-weight:normal;transform:scaleX(0.8883);transform-origin:left top;">Class 1(A)</div><div class="t" style="left:708.9px;top:493.24px;font-size:12px;color:#333;font-weight:normal;letter-spacing:0.05px">David bartlett</div><div class="t" style="left:817.8px;top:493.24px;font-size:12px;color:#333;font-weight:normal;letter-spacing:-0.2px">05/13/2009</div><div class="t" style="left:925.5px;top:493.24px;font-size:12px;color:#333;font-weight:normal;">Male</div><div class="t" style="left:1002px;top:493.24px;font-size:12px;color:#333;font-weight:normal;letter-spacing:0.1px"></div><div class="t" style="right:152.70000000000005px;top:493.07px;font-size:12.2px;color:#333;font-weight:normal;transform:scaleX(1.0582);transform-origin:right top;">0890789657</div><div style="position:absolute;left:1218px;top:490.6px;width:21px;height:18px;background:#7367f0;border-radius:4px"></div><div style="position:absolute;left:1244px;top:490.6px;width:21px;height:18px;background:#7367f0;border-radius:4px"></div><div style="position:absolute;left:1269px;top:490.6px;width:21px;height:18px;background:#7367f0;border-radius:4px"></div><div style="position:absolute;left:1295px;top:490.6px;width:21px;height:18px;background:#7367f0;border-radius:4px"></div><svg style="position:absolute;left:1218px;top:490.6px;" width="21" height="18" viewBox="0 0 21 18"><rect x="6" y="3.4" width="9.7" height="1.6" fill="#fff"/><rect x="6" y="6.3" width="9.7" height="1.6" fill="#fff"/><rect x="6" y="9.2" width="9.7" height="1.6" fill="#fff"/></svg><svg style="position:absolute;left:1244px;top:490.6px;" width="21" height="18" viewBox="0 0 21 18"><path d="M5.6 11.6 L6.3 8.6 L12.3 2.6 L15 5.3 L9 11.3Z" fill="#fff"/><path d="M11.2 3.7 L13.9 6.4" stroke="#7367f0" stroke-width="0.6"/></svg><svg style="position:absolute;left:1269px;top:490.6px;" width="21" height="18" viewBox="0 0 21 18"><path d="M13.7 4.6 Q13.2 3.2 11.2 3.2 Q8.7 3.2 8.7 5.1 Q8.7 6.5 11.2 6.9 Q13.8 7.3 13.8 8.9 Q13.8 10.5 11.2 10.5 Q9.1 10.5 8.5 9.1" fill="none" stroke="#fff" stroke-width="1.5"/><path d="M11.2 1.8 V3.6 M11.2 10 V11.7" stroke="#fff" stroke-width="1.4"/></svg><svg style="position:absolute;left:1295px;top:490.6px;" width="21" height="18" viewBox="0 0 21 18"><path d="M7.2 6 V3.3 H12 L13.6 4.9 V6" fill="none" stroke="#fff" stroke-width="1.3"/><path d="M5.2 6.2 Q5.2 5.6 6 5.6 H15.1 Q15.9 5.6 15.9 6.4 V10 H5.2Z" fill="#fff"/><rect x="7.4" y="8.8" width="6.3" height="2.4" fill="#7367f0" stroke="#fff" stroke-width="1.1"/></svg><div class="t" style="left:233.4px;top:525.59px;font-size:12.3px;color:#333;font-weight:normal;">125005</div><div class="t" style="left:346.7px;top:525.84px;font-size:12px;color:#6a5fe6;font-weight:normal;letter-spacing:-0.05px">Nehal Wadhera</div><div class="t" style="right:821.6px;top:525.67px;font-size:12.2px;color:#333;font-weight:normal;">32001</div><div class="t" style="left:549px;top:524.59px;font-size:12.3px;color:#333;font-weight:normal;transform:scaleX(0.8883);transform-origin:left top;">Class 1(A)</div><div class="t" style="left:708.9px;top:525.84px;font-size:12px;color:#333;font-weight:normal;letter-spacing:0.05px">Karun wadhera</div><div class="t" style="left:817.8px;top:525.84px;font-size:12px;color:#333;font-weight:normal;letter-spacing:-0.2px">11/23/2006</div><div class="t" style="left:925.5px;top:525.84px;font-size:12px;color:#333;font-weight:normal;">Male</div><div class="t" style="left:1002px;top:525.84px;font-size:12px;color:#333;font-weight:normal;letter-spacing:0.1px">General</div><div class="t" style="right:152.70000000000005px;top:525.67px;font-size:12.2px;color:#333;font-weight:normal;transform:scaleX(1.0513);transform-origin:right top;">890786784</div><div style="position:absolute;left:1218px;top:523.2px;width:21px;height:18px;background:#7367f0;border-radius:4px"></div><div style="position:absolute;left:1244px;top:523.2px;width:21px;height:18px;background:#7367f0;border-radius:4px"></div><div style="position:absolute;left:1269px;top:523.2px;width:21px;height:18px;background:#7367f0;border-radius:4px"></div><div style="position:absolute;left:1295px;top:523.2px;width:21px;height:18px;background:#7367f0;border-radius:4px"></div><svg style="position:absolute;left:1218px;top:523.2px;" width="21" height="18" viewBox="0 0 21 18"><rect x="6" y="3.4" width="9.7" height="1.6" fill="#fff"/><rect x="6" y="6.3" width="9.7" height="1.6" fill="#fff"/><rect x="6" y="9.2" width="9.7" height="1.6" fill="#fff"/></svg><svg style="position:absolute;left:1244px;top:523.2px;" width="21" height="18" viewBox="0 0 21 18"><path d="M5.6 11.6 L6.3 8.6 L12.3 2.6 L15 5.3 L9 11.3Z" fill="#fff"/><path d="M11.2 3.7 L13.9 6.4" stroke="#7367f0" stroke-width="0.6"/></svg><svg style="position:absolute;left:1269px;top:523.2px;" width="21" height="18" viewBox="0 0 21 18"><path d="M13.7 4.6 Q13.2 3.2 11.2 3.2 Q8.7 3.2 8.7 5.1 Q8.7 6.5 11.2 6.9 Q13.8 7.3 13.8 8.9 Q13.8 10.5 11.2 10.5 Q9.1 10.5 8.5 9.1" fill="none" stroke="#fff" stroke-width="1.5"/><path d="M11.2 1.8 V3.6 M11.2 10 V11.7" stroke="#fff" stroke-width="1.4"/></svg><svg style="position:absolute;left:1295px;top:523.2px;" width="21" height="18" viewBox="0 0 21 18"><path d="M7.2 6 V3.3 H12 L13.6 4.9 V6" fill="none" stroke="#fff" stroke-width="1.3"/><path d="M5.2 6.2 Q5.2 5.6 6 5.6 H15.1 Q15.9 5.6 15.9 6.4 V10 H5.2Z" fill="#fff"/><rect x="7.4" y="8.8" width="6.3" height="2.4" fill="#7367f0" stroke="#fff" stroke-width="1.1"/></svg><div class="t" style="left:233.4px;top:558.19px;font-size:12.3px;color:#333;font-weight:normal;">10024</div><div class="t" style="left:346.7px;top:558.44px;font-size:12px;color:#6a5fe6;font-weight:normal;letter-spacing:-0.05px">Steven Taylor</div><div class="t" style="right:821.6px;top:558.27px;font-size:12.2px;color:#333;font-weight:normal;">20026</div><div class="t" style="left:549px;top:557.19px;font-size:12.3px;color:#333;font-weight:normal;transform:scaleX(0.8883);transform-origin:left top;">Class 1(A)</div><div class="t" style="left:708.9px;top:558.44px;font-size:12px;color:#333;font-weight:normal;letter-spacing:0.05px">Jason Taylor</div><div class="t" style="left:817.8px;top:558.44px;font-size:12px;color:#333;font-weight:normal;letter-spacing:-0.2px">08/17/2017</div><div class="t" style="left:925.5px;top:558.44px;font-size:12px;color:#333;font-weight:normal;">Male</div><div class="t" style="left:1002px;top:558.44px;font-size:12px;color:#333;font-weight:normal;letter-spacing:0.1px">General</div><div class="t" style="right:152.70000000000005px;top:558.27px;font-size:12.2px;color:#333;font-weight:normal;transform:scaleX(1.0513);transform-origin:right top;">890567345</div><div style="position:absolute;left:1218px;top:555.8px;width:21px;height:18px;background:#7367f0;border-radius:4px"></div><div style="position:absolute;left:1244px;top:555.8px;width:21px;height:18px;background:#7367f0;border-radius:4px"></div><div style="position:absolute;left:1269px;top:555.8px;width:21px;height:18px;background:#7367f0;border-radius:4px"></div><div style="position:absolute;left:1295px;top:555.8px;width:21px;height:18px;background:#7367f0;border-radius:4px"></div><svg style="position:absolute;left:1218px;top:555.8px;" width="21" height="18" viewBox="0 0 21 18"><rect x="6" y="3.4" width="9.7" height="1.6" fill="#fff"/><rect x="6" y="6.3" width="9.7" height="1.6" fill="#fff"/><rect x="6" y="9.2" width="9.7" height="1.6" fill="#fff"/></svg><svg style="position:absolute;left:1244px;top:555.8px;" width="21" height="18" viewBox="0 0 21 18"><path d="M5.6 11.6 L6.3 8.6 L12.3 2.6 L15 5.3 L9 11.3Z" fill="#fff"/><path d="M11.2 3.7 L13.9 6.4" stroke="#7367f0" stroke-width="0.6"/></svg><svg style="position:absolute;left:1269px;top:555.8px;" width="21" height="18" viewBox="0 0 21 18"><path d="M13.7 4.6 Q13.2 3.2 11.2 3.2 Q8.7 3.2 8.7 5.1 Q8.7 6.5 11.2 6.9 Q13.8 7.3 13.8 8.9 Q13.8 10.5 11.2 10.5 Q9.1 10.5 8.5 9.1" fill="none" stroke="#fff" stroke-width="1.5"/><path d="M11.2 1.8 V3.6 M11.2 10 V11.7" stroke="#fff" stroke-width="1.4"/></svg><svg style="position:absolute;left:1295px;top:555.8px;" width="21" height="18" viewBox="0 0 21 18"><path d="M7.2 6 V3.3 H12 L13.6 4.9 V6" fill="none" stroke="#fff" stroke-width="1.3"/><path d="M5.2 6.2 Q5.2 5.6 6 5.6 H15.1 Q15.9 5.6 15.9 6.4 V10 H5.2Z" fill="#fff"/><rect x="7.4" y="8.8" width="6.3" height="2.4" fill="#7367f0" stroke="#fff" stroke-width="1.1"/></svg><div class="t" style="left:1077px;top:564.22px;font-size:19px;color:rgba(110,110,110,0.6);font-weight:normal;z-index:20;letter-spacing:0.05px">Activate Windows</div>
</body></html>
